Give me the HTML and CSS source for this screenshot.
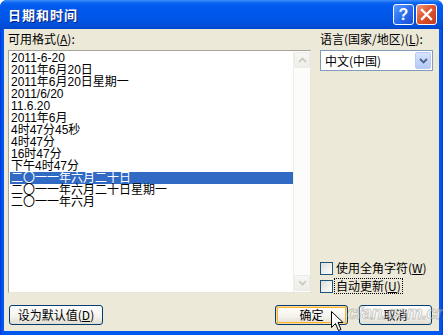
FILE: index.html
```html
<!DOCTYPE html>
<html>
<head>
<meta charset="utf-8">
<link rel="stylesheet" href="styles.css">
</head>
<body>
<div class="window">
  <div class="titlebar">
    <span class="title">日期和时间</span>
    <div class="tbtns">
      <div class="tbtn help">?</div>
      <div class="tbtn close">
        <svg width="13" height="13" viewBox="0 0 13 13"><path d="M2 2 L11 11 M11 2 L2 11" stroke="#fff" stroke-width="2.4" stroke-linecap="square"/></svg>
      </div>
    </div>
  </div>
  <div class="body">
    <div class="main">
      <div class="left">
        <div class="label">可用格式(<u>A</u>):</div>
        <div class="listbox">
          <ul class="items">
            <li>2011-6-20</li>
            <li>2011年6月20日</li>
            <li>2011年6月20日星期一</li>
            <li>2011/6/20</li>
            <li>11.6.20</li>
            <li>2011年6月</li>
            <li>4时47分45秒</li>
            <li>4时47分</li>
            <li>16时47分</li>
            <li>下午4时47分</li>
            <li class="sel">二〇一一年六月二十日</li>
            <li>二〇一一年六月二十日星期一</li>
            <li>二〇一一年六月</li>
          </ul>
          <div class="scrollbar">
            <div class="sbtn"><svg width="9" height="6" viewBox="0 0 9 6"><path d="M1 5 L4.5 1.5 L8 5" fill="none" stroke="#c8c6b8" stroke-width="1.6"/></svg></div>
            <div class="sbtn"><svg width="9" height="6" viewBox="0 0 9 6"><path d="M1 1 L4.5 4.5 L8 1" fill="none" stroke="#c8c6b8" stroke-width="1.6"/></svg></div>
          </div>
        </div>
      </div>
      <div class="right">
        <div class="label">语言(国家/地区)(<u>L</u>):</div>
        <div class="combo">
          <span class="combo-text">中文(中国)</span>
          <div class="combo-btn"><svg width="9" height="6" viewBox="0 0 9 6"><path d="M1 1 L4.5 4.5 L8 1" fill="none" stroke="#4d6185" stroke-width="1.8"/></svg></div>
        </div>
        <div class="checks">
          <div class="check"><span class="box"></span><span class="ctext">使用全角字符(<u>W</u>)</span></div>
          <div class="check"><span class="box"></span><span class="ctext focus">自动更新(<u>U</u>)</span></div>
        </div>
      </div>
    </div>
    <div class="footer">
      <div class="btn wide">设为默认值(<u>D</u>)</div>
      <div class="btn-group">
        <div class="btn default">确定</div>
        <div class="btn">取消</div>
      </div>
    </div>
  </div>
  <div class="watermark">cfan.com.cn</div>
  <svg class="cursor" width="13" height="21" viewBox="0 0 13 21"><path d="M0.5 0.5 L0.5 16.5 L4.5 12.5 L7.5 19.5 L10 18.5 L7 11.5 L12 11.5 Z" fill="#fff" stroke="#000" stroke-width="1"/></svg>
</div>
</body>
</html>
```
FILE: styles.css
```css
* { box-sizing: border-box; }
html, body { margin: 0; padding: 0; }
body {
  font-family: "Noto Sans CJK SC", "Liberation Sans", sans-serif;
  font-size: 12px;
  color: #000;
  background: #fff;
}
u { text-decoration: underline; text-underline-offset: 1px; }
.window {
  position: relative;
  width: 443px;
  height: 335px;
  background: linear-gradient(to right, #0831d9 0, #0058ee 2px, #0058ee 441px, #0831d9 443px);
  border-radius: 7px 7px 0 0;
  display: flex;
  flex-direction: column;
  overflow: hidden;
}
.titlebar {
  height: 29px;
  flex: none;
  display: flex;
  align-items: flex-start;
  justify-content: space-between;
  padding: 0 6px 0 8px;
  background: linear-gradient(#3d8ff7 0, #0a62f0 3px, #0058ee 8px, #0056e8 18px, #0050dc 24px, #0046cc 29px);
}
.title {
  color: #fff;
  font-weight: bold;
  font-size: 13px;
  letter-spacing: 1px;
  line-height: 14px;
  margin-top: 8px;
  text-shadow: 1px 1px 0 #0a1e78;
}
.tbtns { display: flex; gap: 2px; margin-top: 4px; }
.tbtn {
  width: 21px;
  height: 21px;
  border: 1px solid #fff;
  border-radius: 3px;
  display: flex;
  align-items: center;
  justify-content: center;
}
.help {
  background: linear-gradient(135deg, #5b9cff 0%, #2a6ef0 50%, #1750d8 100%);
  color: #fff;
  font-family: "Liberation Sans", sans-serif;
  font-weight: bold;
  font-size: 16px;
  line-height: 19px;
}
.close {
  background: linear-gradient(135deg, #f09a7c 0%, #e1552f 45%, #c4391b 100%);
}
.body {
  flex: 1;
  margin: 0 4px 4px 4px;
  background: #ece9d8;
  padding: 3px 6px 6px 4px;
  display: flex;
  flex-direction: column;
}
.main { display: flex; justify-content: space-between; height: 261px; }
.label { line-height: 14px; height: 14px; margin-bottom: 4px; white-space: nowrap; }
.left { width: 303px; display: flex; flex-direction: column; }
.listbox {
  height: 243px;
  width: 303px;
  background: #fff;
  border: 1px solid #a5a39a;
  border-right-color: #e8e6dc;
  border-bottom-color: #e8e6dc;
  display: flex;
}
.items {
  list-style: none;
  margin: 0;
  padding: 1px 0 0 1px;
  flex: 1;
  font-family: "Liberation Sans", "Noto Sans CJK SC", sans-serif;
}
.items li {
  height: 12px;
  line-height: 12px;
  padding-left: 1px;
  white-space: nowrap;
}
.items li.sel { background: #316ac5; color: #fff; }
.scrollbar {
  width: 17px;
  background: #fcfcfa;
  border-left: 1px solid #efeee8;
  display: flex;
  flex-direction: column;
  justify-content: space-between;
  padding: 1px 0;
}
.sbtn {
  width: 16px;
  height: 16px;
  border: 1px solid #e9ebed;
  border-radius: 2px;
  background: linear-gradient(#f7f7f4, #eeede5);
  display: flex;
  align-items: center;
  justify-content: center;
}
.right { width: 113px; display: flex; flex-direction: column; }
.combo {
  height: 21px;
  border: 1px solid #7f9db9;
  background: #fff;
  display: flex;
  align-items: center;
  justify-content: space-between;
  padding: 1px;
}
.combo-text { padding-left: 3px; line-height: 14px; }
.combo-btn {
  width: 16px;
  height: 17px;
  background: linear-gradient(#d6e3fd, #b5c9f6);
  border: 1px solid #b9cbf5;
  border-radius: 2px;
  display: flex;
  align-items: center;
  justify-content: center;
}
.checks { margin-top: auto; margin-bottom: -2px; display: flex; flex-direction: column; }
.check { height: 18px; display: flex; align-items: center; }
.box {
  width: 13px;
  height: 13px;
  border: 1px solid #1c5180;
  background: linear-gradient(135deg, #dcdcd6, #fff);
  margin-right: 2px;
  flex: none;
}
.ctext { line-height: 14px; padding: 0 1px; white-space: nowrap; }
.focus { outline: 1px dotted #000; outline-offset: 0; }
.footer {
  margin-top: 12px;
  display: flex;
  justify-content: space-between;
  padding-left: 1px;
  padding-right: 1px;
}
.btn-group { display: flex; gap: 11px; }
.btn {
  width: 73px;
  height: 20px;
  border: 1px solid #003c74;
  border-radius: 3px;
  background: linear-gradient(#ffffff, #f3f2ec 60%, #e0ddd0);
  display: flex;
  align-items: center;
  justify-content: center;
  line-height: 14px;
  white-space: nowrap;
}
.btn.wide { width: 94px; }
.btn.default {
  box-shadow: inset 0 0 0 1px #ffd99a, inset 0 0 0 2px #f8b330;
}
.watermark {
  position: absolute;
  left: 347px;
  top: 303px;
  font-family: "Liberation Sans", sans-serif;
  font-style: italic;
  font-weight: bold;
  font-size: 18px;
  color: rgba(255, 255, 255, 0.35);
  -webkit-text-stroke: 1px rgba(110, 110, 110, 0.35);
  letter-spacing: -0.5px;
  pointer-events: none;
}
.cursor { position: absolute; left: 331px; top: 311px; }
```
